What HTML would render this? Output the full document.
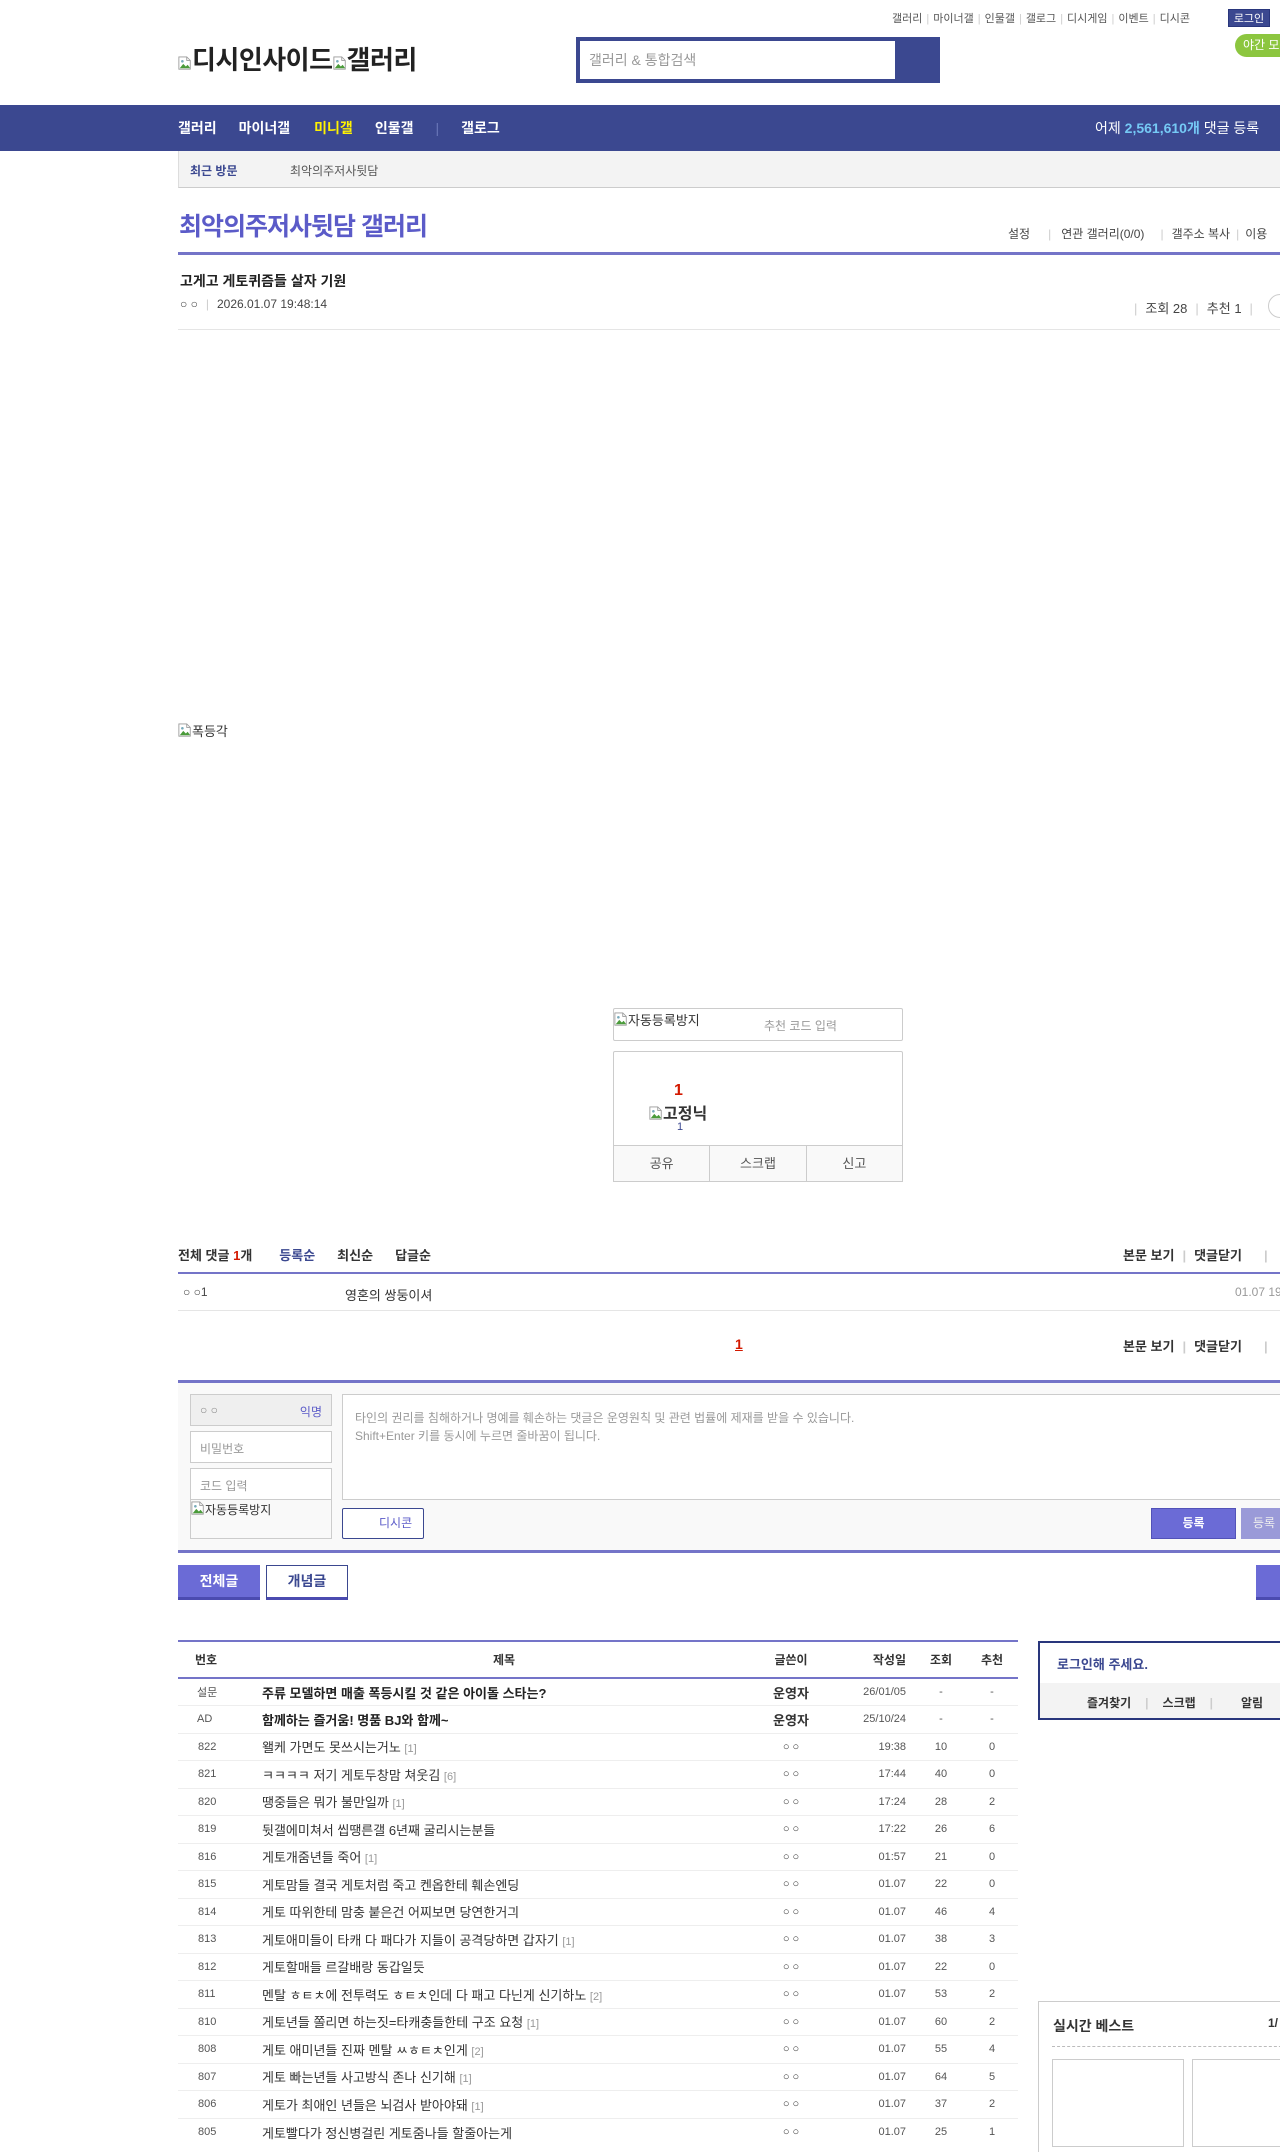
<!DOCTYPE html>
<html><head><meta charset="utf-8">
<style>
*{margin:0;padding:0;box-sizing:border-box}
html,body{width:1280px;height:2152px;overflow:hidden;background:#fff}
body{font-family:"Liberation Sans","Noto Sans CJK KR",sans-serif;color:#333;font-size:12px;position:relative}
.a{position:absolute;white-space:nowrap}
.sep{color:#ccc;margin:0 4px}
.bi{display:inline-block;width:14px;height:16px;vertical-align:-2px}
table{border-collapse:collapse;table-layout:fixed}
td,th{white-space:nowrap;overflow:hidden}
</style></head><body>
<svg width="0" height="0" style="position:absolute"><defs><symbol id="bi" viewBox="0 0 16 16"><path d="M1 1h9l4 4v10H1z" fill="#fff" stroke="#999"/><path d="M10 1v4h4" fill="none" stroke="#999"/><path d="M2 14l4-5 3 3 2-2 3 4z" fill="#4a9b3a"/><circle cx="5" cy="6" r="1.5" fill="#7ab"/></symbol></defs></svg>

<div class="a" style="left:892px;top:10px;font-size:11px;color:#555">갤러리<span class="sep">|</span>마이너갤<span class="sep">|</span>인물갤<span class="sep">|</span>갤로그<span class="sep">|</span>디시게임<span class="sep">|</span>이벤트<span class="sep">|</span>디시콘</div>
<div class="a" style="left:1228px;top:9px;width:42px;height:18px;background:#3b4890;color:#fff;font-size:11px;line-height:18px;text-align:center;border:1px solid #29367c">로그인</div>
<div class="a" style="left:1235px;top:34px;width:60px;height:23px;background:#8cc63f;border-radius:12px;color:#fff;font-size:12px;line-height:23px;padding-left:8px">야간 모드</div>

<div class="a" style="left:178px;top:40px;font-size:26px;font-weight:bold;color:#222;letter-spacing:-0.5px"><svg class="bi"><use href="#bi"/></svg>디시인사이드<svg class="bi"><use href="#bi"/></svg>갤러리</div>

<div class="a" style="left:576px;top:37px;width:364px;height:46px;background:#3b4890"></div>
<div class="a" style="left:580px;top:41px;width:315px;height:38px;background:#fff;font-size:14px;color:#999;line-height:38px;padding-left:9px">갤러리 &amp; 통합검색</div>

<div class="a" style="left:0;top:105px;width:1280px;height:46px;background:#3b4890"></div>
<div class="a" style="left:178px;top:119px;font-size:14px;font-weight:bold;color:#fff;line-height:18px">갤러리<span style="margin-left:22px">마이너갤</span><span style="margin-left:24px;color:#fff200">미니갤</span><span style="margin-left:22px">인물갤</span><span style="margin-left:22px;color:#6a76b8;font-weight:normal">|</span><span style="margin-left:22px">갤로그</span></div>
<div class="a" style="left:1095px;top:119px;font-size:14px;color:#fff;line-height:18px">어제 <b style="color:#75c9f5">2,561,610개</b> 댓글 등록</div>

<div class="a" style="left:178px;top:151px;width:1102px;height:37px;background:#f3f3f3;border-bottom:1px solid #ccc;border-left:1px solid #ddd"></div>
<div class="a" style="left:190px;top:162px;font-size:12px;font-weight:bold;color:#3b4890">최근 방문</div>
<div class="a" style="left:290px;top:162px;font-size:12px;color:#555">최악의주저사뒷담</div>

<div class="a" style="left:179px;top:207px;font-size:25px;font-weight:bold;color:#5b5bc8;letter-spacing:-1px">최악의주저사뒷담 갤러리</div>
<div class="a" style="left:1008px;top:225px;font-size:12px;color:#444">설정<span class="sep" style="margin:0 10px 0 18px">|</span>연관 갤러리(0/0)<span class="sep" style="margin:0 8px 0 16px">|</span>갤주소 복사<span class="sep" style="margin:0 6px">|</span>이용</div>
<div class="a" style="left:178px;top:252px;width:1102px;height:3px;background:#7474c8"></div>

<div class="a" style="left:180px;top:271px;font-size:14px;font-weight:bold;color:#222">고게고 게토퀴즘들 살자 기원</div>
<div class="a" style="left:180px;top:297px;font-size:12px;color:#444">○ ○<span class="sep" style="margin:0 8px">|</span>2026.01.07 19:48:14</div>
<div class="a" style="left:1134px;top:298px;font-size:13px;color:#444"><span class="sep" style="margin:0 8px 0 0">|</span>조회 28<span class="sep" style="margin:0 8px">|</span>추천 1<span class="sep" style="margin:0 8px">|</span></div>
<div class="a" style="left:1268px;top:294px;width:24px;height:24px;border:1px solid #ccc;border-radius:12px"></div>
<div class="a" style="left:178px;top:329px;width:1102px;height:1px;background:#e5e5e5"></div>

<div class="a" style="left:178px;top:721px;font-size:13px;color:#333"><svg class="bi"><use href="#bi"/></svg>폭등각</div>

<div class="a" style="left:613px;top:1008px;width:290px;height:33px;border:1px solid #ccc;border-radius:2px"></div>
<div class="a" style="left:614px;top:1010px;font-size:13px;color:#333"><svg class="bi"><use href="#bi"/></svg>자동등록방지</div>
<div class="a" style="left:764px;top:1017px;font-size:12px;color:#999">추천 코드 입력</div>
<div class="a" style="left:613px;top:1051px;width:290px;height:131px;border:1px solid #ccc;border-radius:2px"></div>
<div class="a" style="left:674px;top:1082px;font-size:16px;font-weight:bold;color:#d31900">1</div>
<div class="a" style="left:649px;top:1100px;font-size:16px;font-weight:bold;color:#333"><svg class="bi"><use href="#bi"/></svg>고정닉</div>
<div class="a" style="left:677px;top:1121px;font-size:11px;color:#3b4890">1</div>
<div class="a" style="left:613px;top:1145px;width:290px;height:37px;border:1px solid #ccc;background:#f9f9f9;display:flex;font-size:13px;color:#555;line-height:35px">
<div style="flex:1;text-align:center;border-right:1px solid #ccc">공유</div><div style="flex:1;text-align:center;border-right:1px solid #ccc">스크랩</div><div style="flex:1;text-align:center">신고</div></div>

<div class="a" style="left:178px;top:1245px;font-size:13px;font-weight:bold;color:#333">전체 댓글 <span style="color:#d31900">1</span>개<span style="margin-left:27px;color:#3b4890">등록순</span><span style="margin-left:22px">최신순</span><span style="margin-left:22px">답글순</span></div>
<div class="a" style="left:1123px;top:1245px;font-size:13px;font-weight:bold;color:#333">본문 보기<span class="sep" style="margin:0 8px">|</span>댓글닫기<span class="sep" style="margin:0 6px 0 22px">|</span></div>
<div class="a" style="left:178px;top:1272px;width:1102px;height:2px;background:#7474c8"></div>
<div class="a" style="left:183px;top:1285px;font-size:12px;color:#444">○ ○1</div>
<div class="a" style="left:345px;top:1285px;font-size:13px;color:#333">영혼의 쌍둥이셔</div>
<div class="a" style="left:1235px;top:1285px;font-size:12px;color:#999">01.07 19</div>
<div class="a" style="left:178px;top:1310px;width:1102px;height:1px;background:#e5e5e5"></div>
<div class="a" style="left:735px;top:1336px;font-size:14px;font-weight:bold;color:#d31900;text-decoration:underline">1</div>
<div class="a" style="left:1123px;top:1336px;font-size:13px;font-weight:bold;color:#333">본문 보기<span class="sep" style="margin:0 8px">|</span>댓글닫기<span class="sep" style="margin:0 6px 0 22px">|</span></div>

<div class="a" style="left:178px;top:1380px;width:1102px;height:173px;background:#f9f9f9;border-top:3px solid #7474c8;border-bottom:3px solid #7474c8"></div>
<div class="a" style="left:190px;top:1394px;width:142px;height:32px;border:1px solid #ccc;background:#efefef;font-size:12px;color:#888;padding:8px 9px">○ ○<span style="float:right;color:#5b5bc8">익명</span></div>
<div class="a" style="left:190px;top:1431px;width:142px;height:32px;border:1px solid #ccc;background:#fff;font-size:12px;color:#999;padding:8px 9px">비밀번호</div>
<div class="a" style="left:190px;top:1468px;width:142px;height:71px;border:1px solid #ccc;background:#f9f9f9"></div>
<div class="a" style="left:190px;top:1468px;width:142px;height:32px;border:1px solid #ccc;background:#fff;font-size:12px;color:#999;padding:8px 9px">코드 입력</div>
<div class="a" style="left:191px;top:1500px;font-size:12px;color:#333"><svg class="bi"><use href="#bi"/></svg>자동등록방지</div>
<div class="a" style="left:342px;top:1394px;width:950px;height:106px;border:1px solid #ccc;background:#fff;font-size:12px;color:#999;padding:14px 12px;line-height:18px">타인의 권리를 침해하거나 명예를 훼손하는 댓글은 운영원칙 및 관련 법률에 제재를 받을 수 있습니다.<br>Shift+Enter 키를 동시에 누르면 줄바꿈이 됩니다.</div>
<div class="a" style="left:342px;top:1508px;width:82px;height:31px;border:1px solid #3b4890;border-radius:2px;background:#fff;font-size:12px;color:#5b5bc8;line-height:29px;padding-left:36px">디시콘</div>
<div class="a" style="left:1151px;top:1508px;width:85px;height:31px;background:#6b6bd6;border:1px solid #5252b8;color:#fff;font-size:12px;font-weight:bold;line-height:29px;text-align:center">등록</div>
<div class="a" style="left:1241px;top:1508px;width:60px;height:31px;background:#9a9ad8;color:#eee;font-size:12px;line-height:31px;padding-left:12px">등록</div>

<div class="a" style="left:178px;top:1565px;width:82px;height:35px;background:#6b6bd6;border-bottom:3px solid #4b4bb0;color:#fff;font-size:14px;font-weight:bold;line-height:33px;text-align:center">전체글</div>
<div class="a" style="left:266px;top:1565px;width:82px;height:35px;background:#fff;border:1px solid #3b4890;border-bottom:3px solid #4b4bb0;color:#3b4890;font-size:14px;font-weight:bold;line-height:31px;text-align:center">개념글</div>
<div class="a" style="left:1256px;top:1565px;width:40px;height:35px;background:#6b6bd6;border-bottom:3px solid #4b4bb0"></div>

<table class="a" style="left:178px;top:1640px;width:840px;font-size:12px;color:#333;border-top:2px solid #7474c8">
<colgroup><col style="width:78px"><col style="width:496px"><col style="width:78px"><col style="width:86px"><col style="width:50px"><col style="width:52px"></colgroup>
<tr style="height:37px;border-bottom:2px solid #7474c8;font-weight:bold;font-size:12px"><th style="text-align:left;padding-left:17px">번호</th><th>제목</th><th>글쓴이</th><th style="text-align:right;padding-right:10px">작성일</th><th>조회</th><th>추천</th></tr>
<tbody id="tb"></tbody>
</table>
<script>
var r=[["설문","주류 모델하면 매출 폭등시킬 것 같은 아이돌 스타는?","운영자","26/01/05","-","-",1],
["AD","함께하는 즐거움! 명품 BJ와 함께~","운영자","25/10/24","-","-",1],
["822","왤케 가면도 못쓰시는거노","○ ○","19:38","10","0","[1]"],
["821","ㅋㅋㅋㅋ 저기 게토두창맘 쳐웃김","○ ○","17:44","40","0","[6]"],
["820","땡중들은 뭐가 불만일까","○ ○","17:24","28","2","[1]"],
["819","뒷갤에미쳐서 씹땡른갤 6년째 굴리시는분들","○ ○","17:22","26","6",""],
["816","게토개줌년들 죽어","○ ○","01:57","21","0","[1]"],
["815","게토맘들 결국 게토처럼 죽고 켄옵한테 훼손엔딩","○ ○","01.07","22","0",""],
["814","게토 따위한테 맘충 붙은건 어찌보면 당연한거긔","○ ○","01.07","46","4",""],
["813","게토애미들이 타캐 다 패다가 지들이 공격당하면 갑자기","○ ○","01.07","38","3","[1]"],
["812","게토할매들 르갈배랑 동갑일듯","○ ○","01.07","22","0",""],
["811","멘탈 ㅎㅌㅊ에 전투력도 ㅎㅌㅊ인데 다 패고 다닌게 신기하노","○ ○","01.07","53","2","[2]"],
["810","게토년들 쫄리면 하는짓=타캐충들한테 구조 요청","○ ○","01.07","60","2","[1]"],
["808","게토 애미년들 진짜 멘탈 ㅆㅎㅌㅊ인게","○ ○","01.07","55","4","[2]"],
["807","게토 빠는년들 사고방식 존나 신기해","○ ○","01.07","64","5","[1]"],
["806","게토가 최애인 년들은 뇌검사 받아야돼","○ ○","01.07","37","2","[1]"],
["805","게토빨다가 정신병걸린 게토줌나들 할줄아는게","○ ○","01.07","25","1",""]];
var h="";r.forEach(function(x,i){var b=x[6]===1;h+='<tr style="height:27.5px;'+(i<16?'border-bottom:1px solid #eee':'')+'"><td style="text-align:left;padding-left:'+(x[0].length==3?'20':'19')+'px;font-size:11px;color:#555">'+x[0]+'</td><td style="padding-left:6px;font-size:13px;'+(b?'font-weight:bold;color:#222':'')+'">'+x[1]+(b||!x[6]?'':' <span style="color:#999;font-size:11px">'+x[6]+'</span>')+'</td><td style="text-align:center;'+(b?'font-weight:bold;font-size:13px':'font-size:11px')+'">'+x[2]+'</td><td style="text-align:right;padding-right:10px;font-size:11px;color:#555">'+x[3]+'</td><td style="text-align:center;font-size:11px;color:#555">'+x[4]+'</td><td style="text-align:center;font-size:11px;color:#555">'+x[5]+'</td></tr>'});
document.getElementById("tb").innerHTML=h;
</script>

<div class="a" style="left:1038px;top:1641px;width:260px;height:79px;border:2px solid #29367c"></div>
<div class="a" style="left:1040px;top:1683px;width:260px;height:35px;background:#f3f3f3"></div>
<div class="a" style="left:1057px;top:1654px;font-size:13px;font-weight:bold;color:#3b4890">로그인해 주세요.</div>
<div class="a" style="left:1087px;top:1694px;font-size:12px;font-weight:bold;color:#333">즐겨찾기<span class="sep" style="margin:0 14px">|</span>스크랩<span class="sep" style="margin:0 14px">|</span><span style="margin-left:14px">알림</span></div>

<div class="a" style="left:1038px;top:2001px;width:260px;height:160px;border:1px solid #ccc"></div>
<div class="a" style="left:1053px;top:2016px;font-size:14px;font-weight:bold;color:#333">실시간 베스트</div>
<div class="a" style="left:1268px;top:2016px;font-size:12px;font-weight:bold;color:#333">1/</div>
<div class="a" style="left:1052px;top:2046px;width:240px;border-top:1px dashed #bbb"></div>
<div class="a" style="left:1052px;top:2059px;width:132px;height:88px;border:1px solid #ccc"></div>
<div class="a" style="left:1192px;top:2059px;width:132px;height:88px;border:1px solid #ccc"></div>
</body></html>
